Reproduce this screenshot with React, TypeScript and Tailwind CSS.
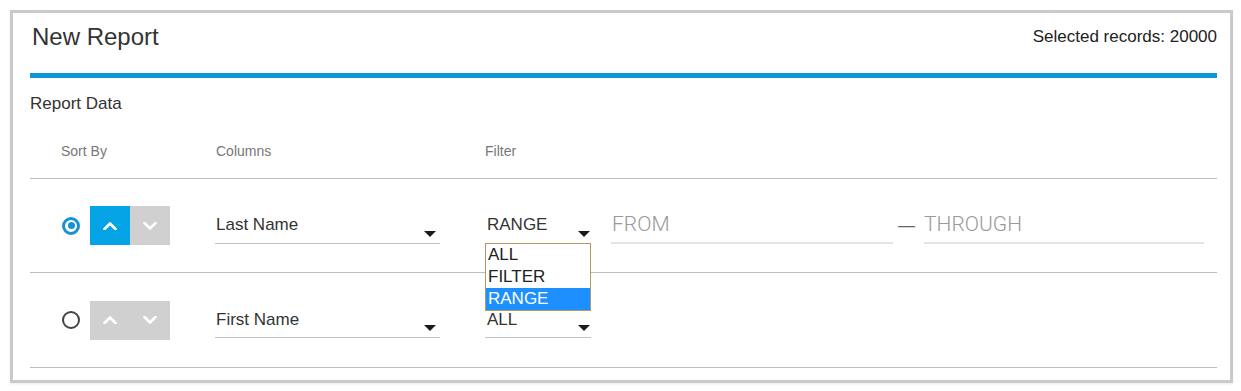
const arial = { fontFamily: '"Liberation Sans", Arial, sans-serif' };

function Chevron({ up }: { up: boolean }) {
    return (
        <svg width="14" height="8" viewBox="0 0 14 8" fill="none">
            <polyline
                points={up ? '1.5,7 7,1.5 12.5,7' : '1.5,1 7,6.5 12.5,1'}
                stroke="white"
                strokeWidth="2.6"
                strokeLinecap="round"
                strokeLinejoin="round"
            />
        </svg>
    );
}

function Caret() {
    return (
        <svg width="12" height="6" viewBox="0 0 12 6" className="self-end mb-[6px]">
            <polygon points="0,0 12,0 6,6" fill="#1a1a1a" />
        </svg>
    );
}

function Radio({ checked }: { checked: boolean }) {
    return checked ? (
        <div className="w-[18px] h-[18px] rounded-full border-[3px] border-[#1793d4] flex items-center justify-center">
            <div className="w-[7px] h-[7px] rounded-full bg-[#1793d4]" />
        </div>
    ) : (
        <div className="w-[18px] h-[18px] rounded-full border-2 border-[#444]" />
    );
}

interface RowProps {
    selected: boolean;
    column: string;
    filter: string;
    open?: boolean;
    range?: boolean;
    height: string;
}

function Row({ selected, column, filter, open, range, height }: RowProps) {
    return (
        <div className={`flex items-center ${height}`}>
            <div className="w-[185px] pl-[32px] flex items-center">
                <Radio checked={selected} />
                <div className="ml-[10px] flex">
                    <div className={`w-[40px] h-[39px] flex items-center justify-center ${selected ? 'bg-[#04a3e6]' : 'bg-[#d0d0d0]'}`}>
                        <Chevron up />
                    </div>
                    <div className="w-[40px] h-[39px] flex items-center justify-center bg-[#d0d0d0]">
                        <Chevron up={false} />
                    </div>
                </div>
            </div>

            <div className="w-[225px] h-[36px] flex items-center justify-between border-b border-[#c2c2c2] pl-[1px] pr-[4px]">
                <span className="text-[17px] text-[#333]">{column}</span>
                <Caret />
            </div>

            <div className="relative ml-[45px] w-[106px] h-[36px] flex items-center justify-between border-b border-[#c2c2c2] pl-[2px] pr-[1px]">
                <span className="text-[17px] text-[#333]">{filter}</span>
                <Caret />
                {open && (
                    <div className="absolute left-0 top-full w-[106px] bg-white border border-[#b39a62] z-10">
                        {['ALL', 'FILTER', 'RANGE'].map((o) => (
                            <div
                                key={o}
                                className={`h-[22px] leading-[22px] pl-[2px] text-[17px] ${o === filter ? 'bg-[#1e8fff] text-white' : 'text-[#222]'}`}
                            >
                                {o}
                            </div>
                        ))}
                    </div>
                )}
            </div>

            {range && (
                <div className="flex items-center" style={{ fontFamily: 'Roboto, sans-serif' }}>
                    <div className="ml-[20px] w-[282px] h-[36px] flex items-center border-b-2 border-[#e4e4e4] pl-[1px]">
                        <span className="text-[21px] font-light text-[#999]">FROM</span>
                    </div>
                    <span className="ml-[5px] text-[17px] text-[#666]" style={arial}>—</span>
                    <div className="ml-[9px] w-[280px] h-[36px] flex items-center border-b-2 border-[#e4e4e4]">
                        <span className="text-[21px] font-light text-[#999]">THROUGH</span>
                    </div>
                </div>
            )}
        </div>
    );
}

export default function App() {
    return (
        <div className="w-[1241px] h-[391px] bg-white pl-[10px] pr-[8px] pt-[10px] overflow-hidden" style={arial}>
            <div className="border-[3px] border-[#cacaca] pl-[17px] pr-[13px] pt-[10px] pb-[12px] shadow-[0_1px_2px_rgba(0,0,0,0.08)]">
                <div className="flex items-center justify-between h-[28px]">
                    <h1 className="pl-[2px] text-[24px] leading-[28px] text-[#333]">New Report</h1>
                    <span className="text-[17px] text-[#222]">Selected records: 20000</span>
                </div>

                <div className="mt-[22px] h-[5px] bg-[#0b97d4]" />

                <div className="mt-[16px] text-[17px] leading-[20px] text-[#333]">Report Data</div>

                <div className="mt-[29px] flex text-[14px] leading-[17px] text-[#777]">
                    <span className="w-[186px] pl-[31px]">Sort By</span>
                    <span className="w-[269px]">Columns</span>
                    <span>Filter</span>
                </div>

                <div className="mt-[18px] h-px bg-[#bdbdbd]" />
                <Row selected column="Last Name" filter="RANGE" open range height="h-[93px]" />
                <div className="h-px bg-[#bdbdbd]" />
                <Row selected={false} column="First Name" filter="ALL" height="h-[94px]" />
                <div className="h-px bg-[#bdbdbd]" />
            </div>
        </div>
    );
}
